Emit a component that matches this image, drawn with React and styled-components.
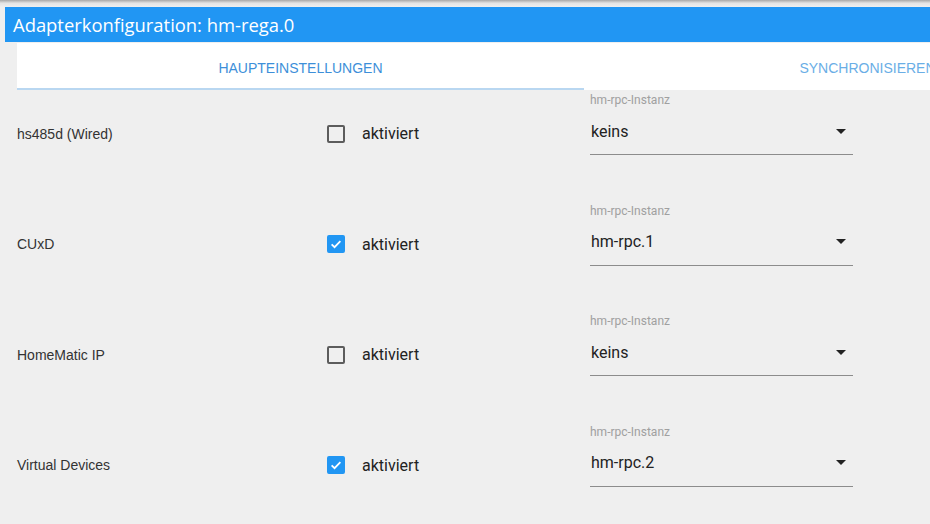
import styled, {createGlobalStyle} from 'styled-components'

const rows = [
  {name: 'hs485d (Wired)', checked: false, value: 'keins'},
  {name: 'CUxD', checked: true, value: 'hm-rpc.1'},
  {name: 'HomeMatic IP', checked: false, value: 'keins'},
  {name: 'Virtual Devices', checked: true, value: 'hm-rpc.2'},
]

export default function App() {
  return (
    <Page>
      <GlobalStyle />
      <TopEdge />
      <Header>Adapterkonfiguration: hm-rega.0</Header>
      <Tabs>
        <Tab active>Haupteinstellungen</Tab>
        <Tab>Synchronisieren</Tab>
      </Tabs>
      <Content>
        {rows.map(row => (
          <Row key={row.name}>
            <Cell>
              <Label>{row.name}</Label>
            </Cell>
            <Cell>
              <Box checked={row.checked}>
                {row.checked && (
                  <svg width="14" height="14" viewBox="0 0 24 24">
                    <path
                      d="M4.5 12.5l5 5L19.5 7"
                      fill="none"
                      stroke="#fff"
                      strokeWidth="3"
                    />
                  </svg>
                )}
              </Box>
              <CheckText>aktiviert</CheckText>
            </Cell>
            <Field>
              <FieldLabel>hm-rpc-Instanz</FieldLabel>
              <SelectBox>
                <Value>{row.value}</Value>
                <Arrow />
              </SelectBox>
            </Field>
          </Row>
        ))}
      </Content>
    </Page>
  )
}

const GlobalStyle = createGlobalStyle`
  body {
    margin: 0;
    background: #efefef;
    font-family: Roboto, 'Liberation Sans', sans-serif;
  }
`
const Page = styled.div`
  width: 930px;
  height: 524px;
  overflow: hidden;
  background: #efefef;
`
const TopEdge = styled.div`
  height: 7px;
  background: linear-gradient(#a8a8a8, #e4e4e4 45%, #efefef);
`
const Header = styled.div`
  margin-left: 5px;
  height: 35px;
  line-height: 35px;
  padding-left: 8px;
  background: #2196f3;
  color: #fff;
  font-family: 'Open Sans', Roboto, sans-serif;
  font-size: 18.4px;
  white-space: nowrap;
`
const Tabs = styled.div`
  display: flex;
  margin-left: 17px;
  margin-top: 1px;
  height: 47px;
  background: #fff;
  overflow: hidden;
`
const Tab = styled.div`
  flex: 0 0 567px;
  display: flex;
  align-items: center;
  justify-content: center;
  box-sizing: border-box;
  padding-top: 4px;
  border-bottom: 2px solid ${p => (p.active ? '#b9d7f1' : 'transparent')};
  color: ${p => (p.active ? '#3d8fd9' : '#6aaee6')};
  font-family: 'Liberation Sans', Arial, sans-serif;
  font-size: 14px;
  text-transform: uppercase;
  white-space: nowrap;
`
const Content = styled.div`
  padding-left: 17px;
`
const Row = styled.div`
  display: grid;
  grid-template-columns: 310px 263px 263px;
  height: 110.5px;
  padding-top: 2px;
  box-sizing: border-box;
`
const Cell = styled.div`
  display: flex;
  align-items: center;
  height: 47px;
  margin-top: 18px;
`
const Label = styled.span`
  font-family: 'Liberation Sans', Arial, sans-serif;
  font-size: 14px;
  color: #333;
`
const Box = styled.span`
  width: 18px;
  height: 18px;
  box-sizing: border-box;
  border-radius: 2px;
  border: 2px solid ${p => (p.checked ? '#2196f3' : '#5c5c5c')};
  background: ${p => (p.checked ? '#2196f3' : 'transparent')};
  display: flex;
  align-items: center;
  justify-content: center;
`
const CheckText = styled.span`
  margin-left: 17px;
  font-size: 16px;
  color: #222;
`
const Field = styled.div`
  display: flex;
  flex-direction: column;
`
const FieldLabel = styled.div`
  height: 16px;
  line-height: 16px;
  font-size: 12px;
  color: #a0a0a0;
`
const SelectBox = styled.div`
  height: 47px;
  box-sizing: border-box;
  border-bottom: 1px solid #8c8c8c;
  display: flex;
  align-items: center;
  justify-content: space-between;
  padding: 0 7px 0 1px;
`
const Value = styled.span`
  font-size: 16px;
  color: #222;
`
const Arrow = styled.span`
  width: 0;
  height: 0;
  border-left: 5px solid transparent;
  border-right: 5px solid transparent;
  border-top: 5px solid #222;
`
